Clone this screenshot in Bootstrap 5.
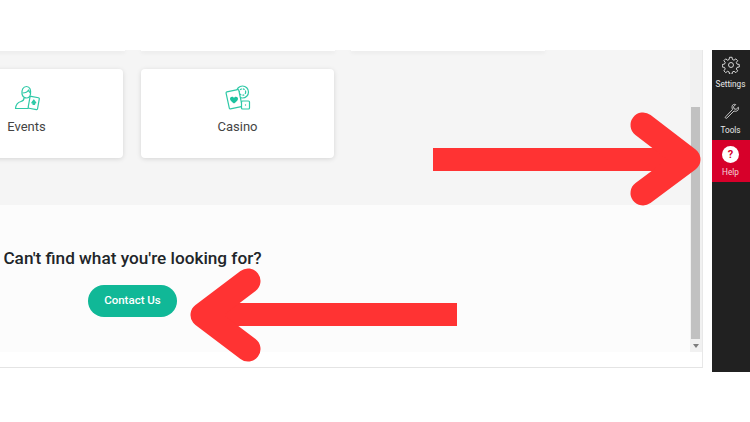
<!DOCTYPE html>
<html>
<head>
    <title>Help</title>
    <link rel="stylesheet" href="https://cdn.jsdelivr.net/npm/bootstrap@5.3.0/dist/css/bootstrap.min.css">
    <style>
        html, body { height: 422px; overflow: hidden; background: #fff; }
        body { font-family: Roboto, "Liberation Sans", sans-serif; position: relative; }
        .stage { padding-top: 50px; width: 750px; gap: 9px; }
        .frame { width: 703px; height: 318px; border-right: 1px solid #e8e8e8; border-bottom: 1px solid #e4e4e4; }
        .pane { height: 302px; }
        .pane-main { width: 690px; overflow: hidden; }
        .grey-band { height: 155px; background: #f5f5f5; }
        .peek-row { height: 1px; margin-left: -69px; gap: 16px; }
        .peek-card { width: 194px; height: 1px; flex: none; background: #fff; box-shadow: 0 1px 4px rgba(0,0,0,.16); }
        .tile-row { margin-left: -70px; margin-top: 18px; gap: 18px; }
        .tile { width: 193px; height: 89px; flex: none; border: 0; border-radius: 4px; box-shadow: 0 1px 5px rgba(0,0,0,.13); color: #444; font-size: 13px; }
        .tile svg { width: 26px; height: 26px; margin-top: 16px; margin-bottom: 6px; }
        .light-band { height: 147px; background: #fcfcfc; }
        .contact-box { width: 265px; padding-top: 41px; }
        .contact-box h2 { font-size: 17.2px; font-weight: 500; line-height: 24px; color: #212529; margin: 0 0 15px; white-space: nowrap; }
        .contact-btn { width: 89px; height: 32px; padding: 0; border: 0; border-radius: 16px; background: #10b897; color: #fff; font-size: 11.5px; font-weight: 500; }
        .track { width: 12px; background: #f1f1f1; padding: 57px 2px 0 1px; }
        .thumb { height: 232px; background: #c1c1c1; }
        .track-arrow { width: 0; height: 0; margin: 5px auto 0; border-left: 3px solid transparent; border-right: 3px solid transparent; border-top: 4px solid #7d7d7d; }
        .rail { width: 38px; height: 322px; background: #212121; color: #e8e8e8; font-size: 8.2px; line-height: 11px; }
        .rail-item { height: 46px; padding: 6px 1px 0 0; }
        .rail-item svg { width: 18px; height: 18px; margin-bottom: 5px; }
        .rail-tools { height: 44px; padding-top: 6px; }
        .rail-help { height: 42px; padding: 6px 1px 0 0; background: #d7002a; color: #f3d5da; }
        .help-dot { width: 17px; height: 17px; border-radius: 50%; background: #fff; color: #d7002a; font-size: 11px; font-weight: 700; line-height: 17px; margin-bottom: 4px; }
        .arrows { position: absolute; left: 0; top: 0; width: 750px; height: 422px; pointer-events: none; }
    </style>
</head>
<body>
    <div class="stage d-flex align-items-start">
        <div class="frame">
            <div class="pane d-flex">
                <div class="pane-main">
                    <div class="grey-band">
                        <div class="peek-row d-flex">
                            <div class="peek-card"></div>
                            <div class="peek-card"></div>
                            <div class="peek-card"></div>
                        </div>
                        <div class="tile-row d-flex">
                            <div class="card tile align-items-center">
                                <svg viewBox="0 0 26 26" fill="none" stroke="#2ec9a7" stroke-width="1.2" stroke-linejoin="round">
                                    <path d="M8 9c-.5-4 1-7.500 4.500-7.500S17 5 16.500 9c-.3 2-1.500 4-4 4s-4-2-4.500-4z"/>
                                    <path d="M8.500 8c2.500 0 5-1 6-3 .5 1.500 1.200 2.500 2 3"/>
                                    <path d="M10 13c0 2-1 3-3 3.500S2 18.500 1.500 23.500h13"/>
                                    <rect x="15" y="12" width="9.500" height="12" rx="1" transform="rotate(10 19.750 18)" fill="#fff"/>
                                    <path d="M19.800 15l2 2.800h-1.500l.3 1.500h-1.600l.3-1.500h-1.500z" fill="#2ec9a7"/>
                                </svg>
                                <span>Events</span>
                            </div>
                            <div class="card tile align-items-center">
                                <svg viewBox="0 0 26 26" fill="none" stroke="#2ec9a7" stroke-width="1.2" stroke-linejoin="round">
                                    <circle cx="17.500" cy="7" r="6"/>
                                    <circle cx="17.500" cy="7" r="3.200" stroke-dasharray="2 1"/>
                                    <rect x="2.500" y="5.500" width="13" height="17.500" rx="1" transform="rotate(-12 9 14)" fill="#fff"/>
                                    <path d="M9 18.500c-2.500-2-4-3.200-4-4.800 0-1.200 1-2 2-2 .9 0 1.600.5 2 1.200.4-.7 1.100-1.200 2-1.200 1 0 2 .8 2 2 0 1.600-1.500 2.800-4 4.800z" fill="#1cc29f" stroke="none"/>
                                    <rect x="16.500" y="16" width="8" height="8" rx="1" fill="#fff"/>
                                    <circle cx="20.500" cy="20" r=".7" fill="#2ec9a7" stroke="none"/>
                                </svg>
                                <span>Casino</span>
                            </div>
                        </div>
                    </div>
                    <div class="light-band">
                        <div class="contact-box text-center">
                            <h2>Can't find what you're looking for?</h2>
                            <button type="button" class="btn contact-btn">Contact Us</button>
                        </div>
                    </div>
                </div>
                <div class="track">
                    <div class="thumb"></div>
                    <div class="track-arrow"></div>
                </div>
            </div>
        </div>
        <div class="rail text-center">
            <div class="rail-item">
                <svg class="d-block mx-auto" viewBox="0 0 24 24" fill="none" stroke="#e8e8e8" stroke-width="1.200" stroke-linejoin="round">
                    <circle cx="12" cy="12" r="3.300"/>
                    <path d="M10.300 2h3.400l.5 3 2.100.9 2.500-1.800 2.400 2.400-1.800 2.500.9 2.100 3 .5v3.400l-3 .5-.9 2.100 1.800 2.500-2.400 2.400-2.500-1.800-2.100.9-.5 3h-3.400l-.5-3-2.100-.9-2.500 1.800-2.400-2.400 1.800-2.500-.9-2.100-3-.5v-3.400l3-.5.9-2.100-1.800-2.500 2.400-2.400 2.500 1.800 2.100-.9z" transform="translate(-.3 -.3)"/>
                </svg>
                <div>Settings</div>
            </div>
            <div class="rail-item rail-tools">
                <svg class="d-block mx-auto" viewBox="0 0 24 24" fill="none" stroke="#e8e8e8" stroke-width="1.100" stroke-linejoin="round">
                    <path d="M14 10L5 19.500c-.8.8-.8 1.500-.2 2s1.300.4 2-.3L16 12c2.500 1 5 0 5.800-2.200.4-1 .3-2 0-2.800l-3 2.800-2.800-.8-.7-2.700 2.900-2.900c-1-.4-2-.4-3 0C13 4 13 7.500 14 10z"/>
                </svg>
                <div>Tools</div>
            </div>
            <div class="rail-help">
                <div class="help-dot mx-auto">?</div>
                <div>Help</div>
            </div>
        </div>
    </div>

    <!-- annotation arrows drawn over the screenshot -->
    <svg class="arrows" viewBox="0 0 750 422">
        <path d="M433 159.500H680" stroke="#ff3333" stroke-width="23" fill="none"/>
        <path d="M643 125L688 159.500L643 193" stroke="#ff3333" stroke-width="25" stroke-linecap="round" stroke-linejoin="round" fill="none"/>
        <path d="M457 314.500H215" stroke="#ff3333" stroke-width="23" fill="none"/>
        <path d="M248 281L203 315L248 349" stroke="#ff3333" stroke-width="25" stroke-linecap="round" stroke-linejoin="round" fill="none"/>
    </svg>
    <script src="https://cdn.jsdelivr.net/npm/bootstrap@5.3.0/dist/js/bootstrap.bundle.min.js"></script>
</body>
</html>
